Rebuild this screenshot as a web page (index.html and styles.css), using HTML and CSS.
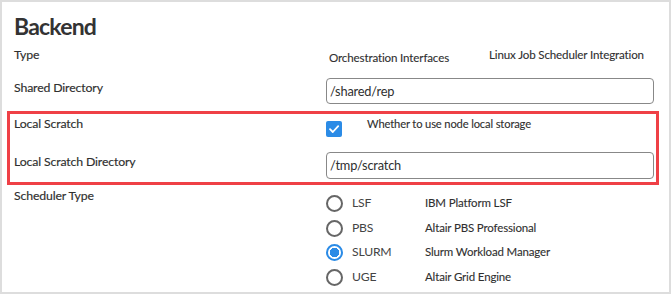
FILE: index.html
```html
<!DOCTYPE html>
<html lang="en">
<head>
    <meta charset="UTF-8">
    <title>Backend</title>
    <link rel="stylesheet" href="styles.css">
</head>
<body>
    <div class="panel">
        <h1 class="panel-title">Backend</h1>

        <div class="row row-type">
            <div class="label">Type</div>
            <div class="type-values">
                <span class="type-main">Orchestration Interfaces</span>
                <span class="type-sub">Linux Job Scheduler Integration</span>
            </div>
        </div>

        <div class="row row-input">
            <div class="label">Shared Directory</div>
            <div class="text-input">/shared/rep</div>
        </div>

        <div class="highlight">
            <div class="row row-check">
                <div class="label">Local Scratch</div>
                <div class="check-line">
                    <span class="checkbox">
                        <svg width="12" height="12" viewBox="0 0 12 12"><path d="M2 6.2 L4.8 9 L10.2 3.2" fill="none" stroke="#fff" stroke-width="1.8" stroke-linecap="round" stroke-linejoin="round"/></svg>
                    </span>
                    <span class="check-text">Whether to use node local storage</span>
                </div>
            </div>

            <div class="row row-input row-scratch">
                <div class="label">Local Scratch Directory</div>
                <div class="text-input">/tmp/scratch</div>
            </div>
        </div>

        <div class="row row-radio">
            <div class="label">Scheduler Type</div>
            <div class="radio-list">
                <div class="radio-item">
                    <span class="radio"></span>
                    <span class="radio-name">LSF</span>
                    <span class="radio-desc">IBM Platform LSF</span>
                </div>
                <div class="radio-item">
                    <span class="radio"></span>
                    <span class="radio-name">PBS</span>
                    <span class="radio-desc">Altair PBS Professional</span>
                </div>
                <div class="radio-item">
                    <span class="radio checked"></span>
                    <span class="radio-name">SLURM</span>
                    <span class="radio-desc">Slurm Workload Manager</span>
                </div>
                <div class="radio-item">
                    <span class="radio"></span>
                    <span class="radio-name">UGE</span>
                    <span class="radio-desc">Altair Grid Engine</span>
                </div>
            </div>
        </div>
    </div>
</body>
</html>
```

FILE: styles.css
```css
* {
    margin: 0;
    padding: 0;
    box-sizing: border-box;
    font-family: 'Lato', sans-serif;
}

body {
    background-color: #ffffff;
    color: #2f2f2f;
}

.panel {
    width: 671px;
    height: 294px;
    border: 2px solid #dddddd;
    padding: 0 15px 0 12px;
    overflow: hidden;
}

.panel-title {
    font-size: 23px;
    font-weight: 700;
    letter-spacing: -0.8px;
    color: #333;
    line-height: 30px;
    padding-top: 9px;
    height: 44px;
}

.row {
    display: grid;
    grid-template-columns: 312px 1fr;
    align-items: start;
}

.label {
    font-size: 12.3px;
    letter-spacing: -0.15px;
    line-height: 18px;
    color: #2f2f2f;
    -webkit-text-stroke: 0.15px #2f2f2f;
}

.row-type {
    height: 32px;
}

.type-values {
    display: flex;
    align-items: flex-start;
    font-size: 11.6px;
    letter-spacing: -0.15px;
    white-space: nowrap;
    -webkit-text-stroke: 0.1px #2f2f2f;
}

.type-main {
    margin-left: 3px;
    margin-top: 3px;
    line-height: 18px;
}

.type-sub {
    margin-left: 40px;
    line-height: 18px;
}

.row-input .label {
    padding-top: 1px;
}

.text-input {
    height: 26px;
    border: 1px solid #888;
    border-radius: 4px;
    font-size: 12.8px;
    letter-spacing: -0.2px;
    line-height: 24px;
    padding-left: 3px;
    color: #2f2f2f;
}

.highlight {
    margin: 7px -5px 0 -7px;
    border: 3px solid #ef4046;
    padding: 1px 2px 3px 4px;
    height: 74px;
}

.row-check {
    height: 37px;
}

.check-line {
    display: flex;
    align-items: flex-start;
}

.checkbox {
    width: 16px;
    height: 16px;
    margin-top: 6px;
    border-radius: 2px;
    background-color: #2b8be6;
    display: flex;
    align-items: center;
    justify-content: center;
}

.check-text {
    font-size: 11.2px;
    letter-spacing: -0.15px;
    line-height: 18px;
    margin-left: 25px;
    -webkit-text-stroke: 0.1px #2f2f2f;
}

.row-scratch .text-input {
    height: 27px;
}

.row-radio {
    margin-top: 2px;
}

.radio-list {
    display: flex;
    flex-direction: column;
    margin-top: 3px;
}

.radio-item {
    display: flex;
    align-items: center;
    height: 24.7px;
    white-space: nowrap;
}

.radio {
    width: 17px;
    height: 17px;
    border: 2px solid #666;
    border-radius: 50%;
    flex-shrink: 0;
    margin-top: 2px;
}

.radio.checked {
    border-color: #2b8be6;
    background: radial-gradient(circle, #2b8be6 0 4.5px, #fff 5px);
}

.radio-name {
    width: 73px;
    margin-left: 9px;
    font-size: 12.2px;
    letter-spacing: -0.2px;
    color: #444;
}

.radio-desc {
    font-size: 11.5px;
    letter-spacing: -0.15px;
    -webkit-text-stroke: 0.1px #2f2f2f;
}
```
